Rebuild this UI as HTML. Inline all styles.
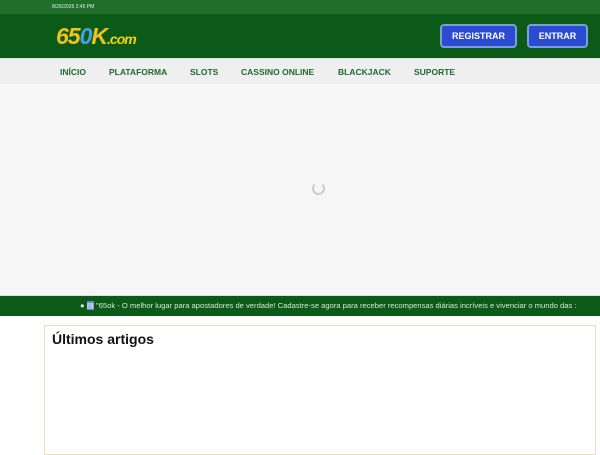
<!DOCTYPE html>
<html><head><style>
*{margin:0;padding:0;box-sizing:border-box}
body{width:600px;height:450px;overflow:hidden;background:#fff;font-family:"Liberation Sans",Arial,sans-serif;position:relative}
.top{position:absolute;left:0;top:0;width:600px;height:14px;background:#1f6e2a;color:#e8f0e8;font-size:5px;padding:4px 0 0 52px}
.hdr{position:absolute;left:0;top:14px;width:600px;height:44px;background:#0b5a17}
.logo{position:absolute;left:56px;top:9px;font:italic bold 23px "Liberation Sans",sans-serif;color:#f2c21b;letter-spacing:-1px}
.logo span{font-size:14px;color:#f2d21b}
.btn{position:absolute;top:10px;height:24px;background:#2b4bd0;border:2px solid #7aa0d8;border-radius:4px;color:#fff;font-size:9px;font-weight:bold;text-align:center;line-height:20px}
.nav{position:absolute;left:0;top:58px;width:600px;height:26px;background:#efefef;border-top:1px solid #ddd}
.nav span{position:absolute;top:8px;font-size:8.5px;font-weight:bold;color:#1e6a2c}
.main{position:absolute;left:0;top:84px;width:600px;height:212px;background:#f6f6f6;border-bottom:1px solid #ddd}
.spin{position:absolute;left:312px;top:182px;width:13px;height:13px;border:2px solid #ccc;border-top-color:transparent;border-radius:50%}
.tick{position:absolute;left:0;top:296px;width:600px;height:20px;background:#0b5a17;color:#d8e8d8;font-size:7.6px;line-height:20px;padding-left:80px;white-space:nowrap;overflow:hidden}
.box{position:absolute;left:44px;top:325px;width:552px;height:130px;border:1px solid #e6dfc4;background:#fff}
.box h2{font-size:14px;font-weight:bold;color:#111;margin:5px 0 0 7px}
</style></head><body>
<div class="top">8/26/2026 2:45 PM</div>
<div class="hdr"><div class="logo">65<b style="color:#4aa0e0">0</b>K<span>.com</span></div>
<div class="btn" style="left:440px;width:77px">REGISTRAR</div>
<div class="btn" style="left:527px;width:61px">ENTRAR</div></div>
<div class="nav"><span style="left:60px">INÍCIO</span><span style="left:109px">PLATAFORMA</span><span style="left:190px">SLOTS</span><span style="left:241px">CASSINO ONLINE</span><span style="left:338px">BLACKJACK</span><span style="left:414px">SUPORTE</span></div>
<div class="main"></div><div class="spin"></div>
<div class="tick">● <span style="background:#6a8ad0;color:#fff">▤</span> "65ok - O melhor lugar para apostadores de verdade! Cadastre-se agora para receber recompensas diárias incríveis e vivenciar o mundo das :</div>
<div class="box"><h2>Últimos artigos</h2></div>
</body></html>
